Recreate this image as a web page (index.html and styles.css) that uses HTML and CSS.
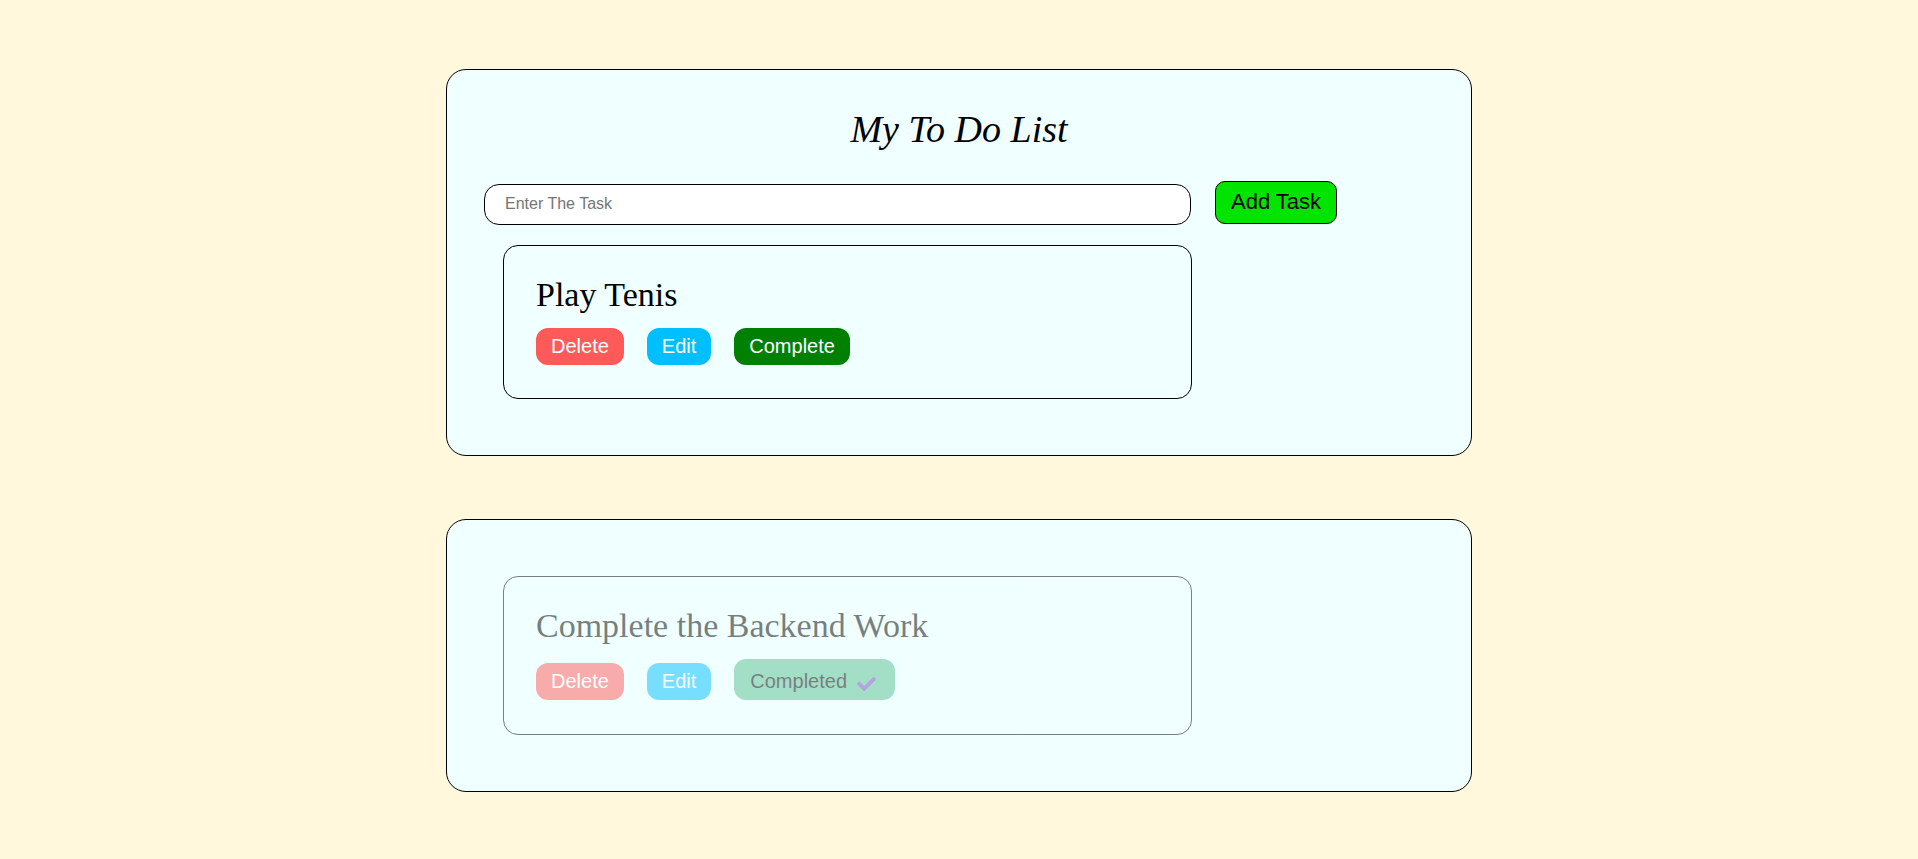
FILE: index.html
```html
<!DOCTYPE html>
<html lang="en">
<head>
<meta charset="utf-8">
<title>My To Do List</title>
<link rel="stylesheet" href="styles.css">
</head>
<body>
<main class="page">
  <section class="panel panel-main">
    <h1 class="title">My To Do List</h1>
    <div class="entry">
      <input class="task-input" type="text" placeholder="Enter The Task">
      <button class="btn-add">Add Task</button>
    </div>
    <ul class="task-list">
      <li class="task">
        <h2 class="task-name">Play Tenis</h2>
        <div class="task-actions">
          <button class="btn btn-delete">Delete</button>
          <button class="btn btn-edit">Edit</button>
          <button class="btn btn-complete">Complete</button>
        </div>
      </li>
    </ul>
  </section>
  <section class="panel panel-done">
    <ul class="task-list">
      <li class="task task-completed">
        <h2 class="task-name">Complete the Backend Work</h2>
        <div class="task-actions">
          <button class="btn btn-delete">Delete</button>
          <button class="btn btn-edit">Edit</button>
          <button class="btn btn-completed">Completed<svg class="check" viewBox="0 66 512 380" width="19" height="14" aria-hidden="true"><path d="M173.898 439.404l-166.4-166.4c-9.997-9.997-9.997-26.206 0-36.204l36.203-36.204c9.997-9.998 26.207-9.998 36.204 0L192 312.69 432.095 72.596c9.997-9.997 26.207-9.997 36.204 0l36.203 36.204c9.997 9.997 9.997 26.206 0 36.204l-294.4 294.401c-9.998 9.997-26.207 9.997-36.204-.001z"/></svg></button>
        </div>
      </li>
    </ul>
  </section>
</main>
</body>
</html>
```

FILE: styles.css
```css
* {
  box-sizing: border-box;
}

html, body {
  margin: 0;
  padding: 0;
}

body {
  background: #fff8dc;
  font-family: "Liberation Serif", "Times New Roman", serif;
}

.page {
  padding-top: 69px;
  display: flex;
  flex-direction: column;
  align-items: center;
  gap: 63px;
}

.panel {
  width: 1026px;
  background: #f0ffff;
  border: 1px solid #000;
  border-radius: 20px;
  padding: 0 37px 56px;
}

.panel-main {
  padding-top: 37px;
}

.panel-done {
  padding-top: 56px;
}

.title {
  margin: 0 0 30px;
  text-align: center;
  font-family: "Liberation Serif", "Times New Roman", serif;
  font-style: italic;
  font-weight: normal;
  font-size: 38px;
}

.entry {
  display: flex;
  align-items: baseline;
  gap: 24px;
}

.task-input {
  width: 707px;
  height: 41px;
  border: 1px solid #000;
  border-radius: 15px;
  padding: 0 20px;
  font-family: "Liberation Sans", Arial, sans-serif;
  font-size: 16px;
  background: #fff;
  outline: none;
}

.task-input::placeholder {
  color: #757575;
}

.btn-add {
  font-family: "Liberation Sans", Arial, sans-serif;
  font-size: 22px;
  color: #000;
  background: #00e400;
  border: 1px solid #000;
  border-radius: 10px;
  padding: 7px 15px 8px;
  cursor: pointer;
}

.task-list {
  list-style: none;
  margin: 20px 0 0 19px;
  padding: 0;
}

.panel-done .task-list {
  margin-top: 0;
}

.task {
  width: 689px;
  border: 1px solid #000;
  border-radius: 15px;
  padding: 30px 32px 33.5px 32px;
}

.task-name {
  margin: 0 0 14px;
  font-family: "Liberation Serif", "Times New Roman", serif;
  font-weight: normal;
  font-size: 34px;
}

.task-actions {
  display: flex;
  align-items: flex-end;
  gap: 23px;
}

.btn {
  font-family: "Liberation Sans", Arial, sans-serif;
  font-size: 20px;
  color: #fff;
  border: none;
  border-radius: 12px;
  padding: 7px 15px;
  cursor: pointer;
}

.btn-delete {
  background: #ff5a5a;
}

.btn-edit {
  background: #00bfff;
}

.btn-complete {
  background: #008000;
}

.btn-completed {
  background: #56c18f;
  color: #000;
  padding: 11px 19px 7px 16px;
  display: inline-flex;
  align-items: baseline;
}

.check {
  margin-left: 10px;
  fill: #8049c1;
  position: relative;
  top: 3px;
}

.task-completed {
  opacity: 0.5;
}
```
